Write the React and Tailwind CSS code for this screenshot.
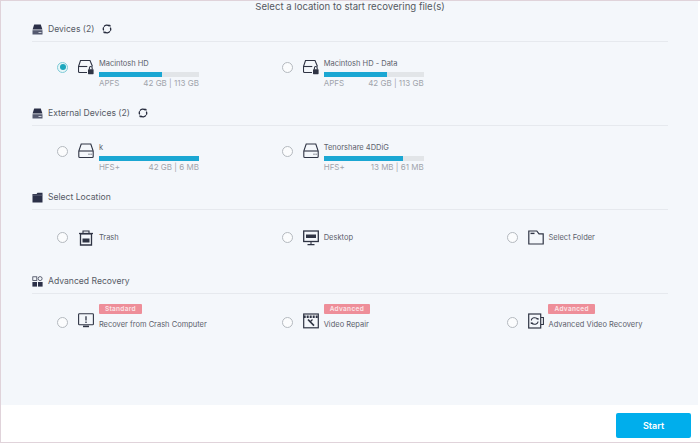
const INK = '#2f3444'

// ── Icons ────────────────────────────────────────────────
const DriveSolid = () => (
  <svg width="11" height="11" viewBox="0 0 11 11">
    <path d="M2.2 0.5h6.6L10.4 5.5H0.6z" fill="#2b3048" />
    <path d="M0.5 6.2h10v4.3h-10z" fill="#555a70" />
    <path d="M6.5 8h3v1h-3z" fill="#c9cdd8" />
  </svg>
)

const FolderSolid = () => (
  <svg width="11" height="11" viewBox="0 0 11 11">
    <path d="M0.5 2h4L5.5 0.7h5v9.8h-10z" fill="#2b3048" />
    <path d="M0.5 3.2h10" stroke="#7b8094" strokeWidth="0.6" />
  </svg>
)

const AppsIcon = () => (
  <svg width="11" height="11" viewBox="0 0 11 11">
    <rect x="0.8" y="0.8" width="4" height="3.6" fill="none" stroke="#3b4054" strokeWidth="0.8" />
    <circle cx="8.1" cy="2.6" r="2" fill="none" stroke="#3b4054" strokeWidth="0.8" />
    <rect x="0.4" y="6" width="4.6" height="4.6" fill="#2b3048" />
    <rect x="6" y="6" width="4.6" height="4.6" fill="#2b3048" />
  </svg>
)

const Refresh = () => (
  <svg width="10" height="10" viewBox="0 0 10 10" fill="none" stroke="#23283a" strokeWidth="1.3">
    <path d="M2 2.6A3.7 3.7 0 0 1 7.2 2" />
    <path d="M8 7.4A3.7 3.7 0 0 1 2.8 8" />
    <path d="M1.6 3.2A3.7 3.7 0 0 0 1.6 6.4" />
    <path d="M8.4 6.8A3.7 3.7 0 0 0 8.4 3.6" />
    <path d="M6.4 0.6l2.2 0.4-0.4 2.4z" fill="#23283a" stroke="none" />
    <path d="M3.6 9.4l-2.2-0.4 0.4-2.4z" fill="#23283a" stroke="none" />
  </svg>
)

const Glyph = ({ children }) => (
  <svg width="16" height="16" viewBox="0 0 16 16" fill="none" stroke={INK} strokeWidth="1.1" className="shrink-0">
    {children}
  </svg>
)

const LockDrive = () => (
  <Glyph>
    <path d="M9 13.5H1.5a1 1 0 0 1-1-1V7.5L2.5 1.5h9.5L14.5 7.5" />
    <path d="M0.8 7.5h8.5" />
    <rect x="10" y="10.2" width="5.6" height="5" rx="0.6" fill={INK} stroke="none" />
    <path d="M11.4 10.4V8.9a1.4 1.4 0 0 1 2.8 0v1.5" />
  </Glyph>
)

const Drive = () => (
  <Glyph>
    <path d="M3.2 1h9.6l2.4 7v5.5a1 1 0 0 1-1 1H1.8a1 1 0 0 1-1-1V8z" />
    <path d="M1 8h14" />
    <path d="M10.5 11.2h1M12.6 11.2h1" strokeWidth="1" />
  </Glyph>
)

const Trash = () => (
  <Glyph>
    <path d="M2.5 3.8h11V15h-11z" strokeWidth="1.3" />
    <path d="M1 3.5h14" strokeWidth="1.3" />
    <path d="M5 3.5V1h6v2.5" />
    <rect x="4.5" y="8.5" width="7" height="4" fill={INK} stroke="none" />
  </Glyph>
)

const Desktop = () => (
  <Glyph>
    <rect x="0.7" y="1" width="14.6" height="10.5" strokeWidth="1.3" />
    <rect x="3" y="4.5" width="10" height="3.5" fill={INK} stroke="none" />
    <path d="M8 11.5v3M4.5 14.6h7" />
  </Glyph>
)

const Folder = () => (
  <Glyph>
    <path d="M0.8 14V1h8l2.2 2.8h4.2V14z" strokeWidth="1.2" />
    <path d="M2.5 3.4h4" strokeWidth="1.4" />
  </Glyph>
)

const CrashMonitor = () => (
  <Glyph>
    <rect x="0.6" y="0.7" width="14.8" height="11" rx="0.8" strokeWidth="1.1" />
    <path d="M8 3.2v4.4M8 8.6v1.3" strokeWidth="1.3" />
    <path d="M5 13.4h6" strokeWidth="1.6" />
  </Glyph>
)

const VideoRepair = () => (
  <Glyph>
    <rect x="0.7" y="1" width="14.6" height="13.8" strokeWidth="1.2" />
    <path d="M0.7 3.8h14.6" strokeWidth="2.4" strokeDasharray="2 1" />
    <path d="M5 6.5l2.6 2.6M7.4 9l3.6 3.6" strokeWidth="1.7" />
    <path d="M9.5 6.5L7 9" strokeWidth="1.3" />
  </Glyph>
)

const VideoLoop = () => (
  <Glyph>
    <rect x="0.7" y="1" width="12" height="14" strokeWidth="1.2" />
    <path d="M13 4.5h2.4v7H13" strokeWidth="1.1" />
    <path d="M3.5 7.5A3 2.2 0 0 1 9.5 6.5M9.8 8.5A3 2.2 0 0 1 3.8 9.5" />
    <path d="M8.5 5h2v2.2z M4.8 11H2.8V8.8z" fill={INK} stroke="none" />
  </Glyph>
)

// ── Pieces ───────────────────────────────────────────────
const Radio = ({ checked }) => (
  <span className={checked
    ? 'w-[11px] h-[11px] shrink-0 rounded-full border border-[#7fcbd8] bg-[#e8f6f8] flex items-center justify-center'
    : 'w-[11px] h-[11px] shrink-0 rounded-full border border-[#b4b9bf] bg-[#fbfcfd] flex items-center justify-center'}>
    {checked && <span className="w-[6px] h-[6px] rounded-full bg-[#1ba6bd]" />}
  </span>
)

function Header({ icon, title, refresh }) {
  return (
    <div className="h-[25px] flex items-center border-b border-[#e6e9ee] pt-[1px]">
      <span className="w-[11px] h-[11px] flex mr-[5px]">{icon}</span>
      <span className="text-[8.6px] text-[#565b66]">{title}</span>
      {refresh && <span className="ml-[8px] flex"><Refresh /></span>}
    </div>
  )
}

function DiskRow({ icon, name, used, type, size, checked }) {
  return (
    <div className="flex items-start">
      <span className="mt-[4px] mr-[10px] flex"><Radio checked={checked} /></span>
      <span className="mt-[1px] mr-[4.5px] flex">{icon}</span>
      <div className="w-[100px]">
        <div className="h-[10px] pt-[1px] leading-[10px] text-[7.5px] text-[#5c616b] whitespace-nowrap">{name}</div>
        <div className="h-[5px] mt-[4px] bg-[#e2e5e8]">
          <div className="h-full bg-[#1ba7d3]" style={{ width: used + '%' }} />
        </div>
        <div className="h-[10px] mt-[1px] leading-[10px] flex justify-between text-[8px] text-[#a0a4ab]">
          <span>{type}</span>
          <span>{size}</span>
        </div>
      </div>
    </div>
  )
}

function PlainRow({ icon, name }) {
  return (
    <div className="flex items-center h-[16px]">
      <span className="mr-[10px] flex"><Radio /></span>
      <span className="mr-[4.5px] flex">{icon}</span>
      <span className="text-[7.5px] text-[#5c616b] whitespace-nowrap">{name}</span>
    </div>
  )
}

function BadgeRow({ icon, name, badge }) {
  return (
    <div className="flex items-start">
      <span className="mt-[13px] mr-[10px] flex"><Radio /></span>
      <span className="mt-[9px] mr-[4.5px] flex">{icon}</span>
      <div className="flex flex-col items-start">
        <span className="h-[10px] leading-[10px] px-[6px] rounded-[1px] bg-[#ee8e99] text-[#fbe4e7] font-semibold text-[6.5px] tracking-[0.3px]">
          {badge}
        </span>
        <div className="mt-[6px] leading-[10px] text-[7.5px] text-[#5c616b] whitespace-nowrap">{name}</div>
      </div>
    </div>
  )
}

const columns = 'grid grid-cols-[224.8px_224.8px_1fr] pl-[25.4px]'

export default function App() {
  return (
    <div
      className="w-[700px] h-[443px] flex flex-col bg-white border-t border-l border-b border-[#e0d3da] overflow-hidden"
      style={{ fontFamily: 'Inter, "Liberation Sans", sans-serif' }}
    >
      <main className="h-[404px] mr-[2px] bg-[#f4f7fb] pl-[31px] pr-[30px]">
        <div className="h-[15.5px] text-center text-[9.6px] leading-[11px] text-[#55595f]">
          Select a location to start recovering file(s)
        </div>

        <section className="h-[84px]">
          <Header icon={<DriveSolid />} title="Devices (2)" refresh />
          <div className={columns + ' pt-[16px]'}>
            <DiskRow icon={<LockDrive />} name="Macintosh HD" used={63} type="APFS" size="42 GB | 113 GB" checked />
            <DiskRow icon={<LockDrive />} name="Macintosh HD - Data" used={63} type="APFS" size="42 GB | 113 GB" />
          </div>
        </section>

        <section className="h-[84px]">
          <Header icon={<DriveSolid />} title="External Devices (2)" refresh />
          <div className={columns + ' pt-[16px]'}>
            <DiskRow icon={<Drive />} name="k" used={100} type="HFS+" size="42 GB | 6 MB" />
            <DiskRow icon={<Drive />} name="Tenorshare 4DDiG" used={79} type="HFS+" size="13 MB | 61 MB" />
          </div>
        </section>

        <section className="h-[84px]">
          <Header icon={<FolderSolid />} title="Select Location" />
          <div className={columns + ' pt-[20px]'}>
            <PlainRow icon={<Trash />} name="Trash" />
            <PlainRow icon={<Desktop />} name="Desktop" />
            <PlainRow icon={<Folder />} name="Select Folder" />
          </div>
        </section>

        <section className="h-[84px]">
          <Header icon={<AppsIcon />} title="Advanced Recovery" />
          <div className={columns + ' pt-[10px]'}>
            <BadgeRow icon={<CrashMonitor />} badge="Standard" name="Recover from Crash Computer" />
            <BadgeRow icon={<VideoRepair />} badge="Advanced" name="Video Repair" />
            <BadgeRow icon={<VideoLoop />} badge="Advanced" name="Advanced Video Recovery" />
          </div>
        </section>
      </main>

      <footer className="flex-1 flex items-start justify-end pt-[8px] pr-[9px]">
        <button className="w-[75px] h-[25px] rounded-[2px] bg-[#00aeec] text-white text-[9px] font-semibold">
          Start
        </button>
      </footer>
    </div>
  )
}
